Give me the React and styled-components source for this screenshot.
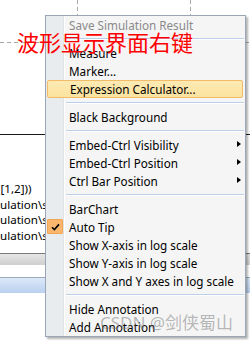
import React from "react";
import styled, { createGlobalStyle } from "styled-components";

const Global = createGlobalStyle`
  html, body { margin: 0; padding: 0; background: #fff; }
  body { width: 250px; height: 341px; overflow: hidden; font-family: "Noto Sans", "Liberation Sans", sans-serif; }
`;

const Scene = styled.div`
  position: relative;
  width: 250px;
  height: 341px;
  overflow: hidden;
  background: #fff;
  display: flex;
  flex-direction: column;
`;

const Plot = styled.svg`
  display: block;
  width: 250px;
  height: 134px;
  flex: none;
`;

const Rule = styled.div`
  height: 1px;
  flex: none;
  background: ${(p) => p.$color};
`;

const TextArea = styled.div`
  height: 118px;
  flex: none;
  padding-top: 46px;
  box-sizing: border-box;
  overflow: hidden;
  display: flex;
  flex-direction: column;
`;

const CodeLine = styled.div`
  font-family: "Noto Sans", "Liberation Sans", sans-serif;
  font-size: 11.6px;
  line-height: 15.5px;
  height: 15.5px;
  white-space: nowrap;
  color: #000;
  margin-left: ${(p) => p.$shift || 0}px;
`;

const Bar = styled.div`
  height: ${(p) => p.$h}px;
  flex: none;
  background: ${(p) => p.$bg};
`;

const Gap = styled.div`
  height: ${(p) => p.$h}px;
  flex: none;
`;

const Note = styled.div`
  position: absolute;
  left: 17px;
  top: 29px;
  font-family: "Noto Sans CJK SC", sans-serif;
  font-size: 22px;
  line-height: 24px;
  color: #ff0000;
  z-index: 3;
  white-space: nowrap;
`;

const Watermark = styled.div`
  position: absolute;
  left: 100px;
  top: 312px;
  font-family: "Noto Sans", "Noto Sans CJK SC", sans-serif;
  font-size: 17px;
  line-height: 22px;
  color: rgba(120, 120, 120, 0.5);
  z-index: 3;
  white-space: nowrap;
`;

const Menu = styled.div`
  position: absolute;
  left: 45px;
  top: 15px;
  width: 201px;
  box-sizing: border-box;
  border: 1px solid #9aa6b6;
  box-shadow: 2px 2px 2px rgba(0, 0, 0, 0.3);
  background: linear-gradient(
    to right,
    #e9ecee 0 17px,
    #e2e3e3 17px 18px,
    #ffffff 18px 19px,
    #f5f5f5 19px
  );
  display: flex;
  flex-direction: column;
  z-index: 2;
`;

const Item = styled.div`
  position: relative;
  height: 18px;
  box-sizing: border-box;
  display: flex;
  align-items: center;
  margin: 0 ${(p) => (p.$active ? "2px" : "0")} 0 ${(p) => (p.$active ? "1px" : "0")};
  padding-left: ${(p) => (p.$active ? "22px" : "23px")};
  border: ${(p) => (p.$active ? "1px solid #f3bb68" : "none")};
  border-radius: ${(p) => (p.$active ? "2px" : "0")};
  background: ${(p) => (p.$active ? "linear-gradient(#fdeab3, #fbe39f)" : "transparent")};
  font-size: 11.7px;
  color: ${(p) => (p.$disabled ? "#8a8a8a" : "#000")};
  white-space: nowrap;
`;

const Separator = styled.div`
  height: 10px;
  display: flex;
  align-items: center;
  padding-left: 20px;
  padding-right: 1px;
  &::after {
    content: "";
    flex: 1;
    height: 1px;
    background: #bcd0ec;
    border-bottom: 1px solid #ffffff;
  }
`;

const Arrow = styled.span`
  position: absolute;
  right: 4px;
  top: 5px;
  width: 0;
  height: 0;
  border-top: 3.5px solid transparent;
  border-bottom: 3.5px solid transparent;
  border-left: 4px solid #000;
`;

const Check = styled.span`
  position: absolute;
  left: 1px;
  top: 1px;
  width: 16px;
  height: 15px;
  box-sizing: border-box;
  background: #fbb66d;
  border: 1px solid #f2a552;
  border-radius: 1px;
  display: flex;
  align-items: center;
  justify-content: center;
`;

const entries = [
  { t: "Save Simulation Result", disabled: true },
  "sep",
  { t: "Measure" },
  { t: "Marker..." },
  { t: "Expression Calculator...", active: true },
  "sep",
  { t: "Black Background" },
  "sep",
  { t: "Embed-Ctrl Visibility", sub: true },
  { t: "Embed-Ctrl Position", sub: true },
  { t: "Ctrl Bar Position", sub: true },
  "sep",
  { t: "BarChart" },
  { t: "Auto Tip", checked: true },
  { t: "Show X-axis in log scale" },
  { t: "Show Y-axis in log scale" },
  { t: "Show X and Y axes in log scale" },
  "sep",
  { t: "Hide Annotation" },
  { t: "Add Annotation" },
];

export default function App() {
  return (
    <>
      <Global />
      <Scene>
        <Plot viewBox="0 0 250 134">
          <g stroke="#a8a8a8" strokeWidth="1" strokeDasharray="4 3">
            <line x1="77.5" y1="0" x2="77.5" y2="134" />
            <line x1="190.5" y1="0" x2="190.5" y2="134" />
            <line x1="0" y1="42.5" x2="250" y2="42.5" />
          </g>
        </Plot>
        <Rule $color="#1a1a1a" />
        <TextArea>
          <CodeLine $shift={-3}>([1,2]))</CodeLine>
          <CodeLine>ulation\simulation.raw</CodeLine>
          <CodeLine>ulation\simulation.log</CodeLine>
          <CodeLine>ulation\simulation.cir</CodeLine>
        </TextArea>
        <Rule $color="#7a7a7a" />
        <Bar $h={11} $bg="linear-gradient(#e6e6e6, #cfcfcf)" />
        <Gap $h={12} />
        <Rule $color="#9aa9bd" />
        <Bar $h={15} $bg="linear-gradient(#dde9f9, #b9d0ef)" />
      </Scene>
      <Menu>
        {entries.map((e, i) =>
          e === "sep" ? (
            <Separator key={i} />
          ) : (
            <Item key={i} $active={e.active} $disabled={e.disabled}>
              {e.checked && (
                <Check>
                  <svg width="9" height="8" viewBox="0 0 9 8">
                    <path d="M1 4.2 L3.4 6.6 L8 1.4" stroke="#000" strokeWidth="1.6" fill="none" />
                  </svg>
                </Check>
              )}
              {e.t}
              {e.sub && <Arrow />}
            </Item>
          )
        )}
      </Menu>
      <Note>波形显示界面右键</Note>
      <Watermark>CSDN @剑侠蜀山</Watermark>
    </>
  );
}
